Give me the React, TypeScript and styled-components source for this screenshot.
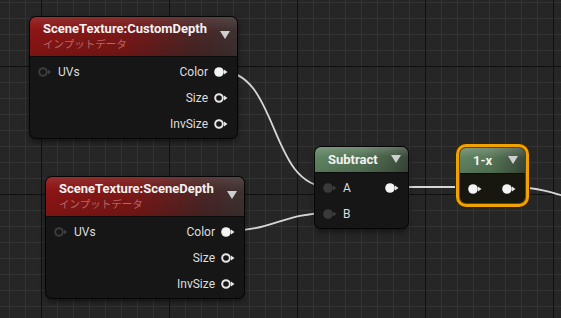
import React from 'react';
import styled, { createGlobalStyle, css } from 'styled-components';

type PinKind = 'filled' | 'open' | 'dim' | 'linked';
type Tone = 'red' | 'green';

interface PinSpec {
  label?: string;
  pin: PinKind;
}

interface RowSpec {
  input?: PinSpec;
  output?: PinSpec;
}

interface NodeSpec {
  id: string;
  x: number;
  y: number;
  w: number;
  tone: Tone;
  title: string;
  subtitle?: string;
  selected?: boolean;
  rows: RowSpec[];
}

const nodes: NodeSpec[] = [
  {
    id: 'customDepth',
    x: 30,
    y: 17,
    w: 207,
    tone: 'red',
    title: 'SceneTexture:CustomDepth',
    subtitle: 'インプットデータ',
    rows: [
      { input: { label: 'UVs', pin: 'dim' }, output: { label: 'Color', pin: 'filled' } },
      { output: { label: 'Size', pin: 'open' } },
      { output: { label: 'InvSize', pin: 'open' } },
    ],
  },
  {
    id: 'sceneDepth',
    x: 46,
    y: 177,
    w: 198,
    tone: 'red',
    title: 'SceneTexture:SceneDepth',
    subtitle: 'インプットデータ',
    rows: [
      { input: { label: 'UVs', pin: 'dim' }, output: { label: 'Color', pin: 'filled' } },
      { output: { label: 'Size', pin: 'open' } },
      { output: { label: 'InvSize', pin: 'open' } },
    ],
  },
  {
    id: 'subtract',
    x: 315,
    y: 147,
    w: 93,
    tone: 'green',
    title: 'Subtract',
    rows: [
      { input: { label: 'A', pin: 'linked' }, output: { pin: 'filled' } },
      { input: { label: 'B', pin: 'linked' } },
    ],
  },
  {
    id: 'oneMinus',
    x: 460,
    y: 148,
    w: 65,
    tone: 'green',
    title: '1-x',
    selected: true,
    rows: [{ input: { pin: 'filled' }, output: { pin: 'filled' } }],
  },
];

// wire curves, drawn under the nodes
const wires = [
  'M 220 71 C 280 71, 268 187, 329 187',
  'M 227 231 C 272 231, 283 213, 329 213',
  'M 391 187 L 473 187',
  'M 509 187 C 548 187, 560 196, 620 214',
];

const GlobalStyle = createGlobalStyle`
  html, body {
    margin: 0;
    padding: 0;
    background: #262626;
  }
  body {
    font-family: Roboto, "Noto Sans", "Noto Sans CJK JP", sans-serif;
  }
`;

const Canvas = styled.div`
  position: relative;
  width: 561px;
  height: 318px;
  overflow: hidden;
  background-color: #262626;
  background-image:
    linear-gradient(to right, #101010 1px, transparent 1px),
    linear-gradient(to bottom, #101010 1px, transparent 1px),
    linear-gradient(to right, #333333 1px, transparent 1px),
    linear-gradient(to bottom, #333333 1px, transparent 1px);
  background-size: 128px 128px, 128px 128px, 16px 16px, 16px 16px;
  background-position: 41px 66px, 41px 66px, 9px 2px, 9px 2px;
`;

const WireLayer = styled.svg`
  position: absolute;
  inset: 0;
  width: 561px;
  height: 318px;
`;

const Wire = styled.path`
  fill: none;
  stroke: #d6d6d6;
  stroke-width: 1.8;
`;

const NodeBox = styled.div<{ $x: number; $y: number; $w: number; $selected?: boolean }>`
  position: absolute;
  left: ${(p) => p.$x}px;
  top: ${(p) => p.$y}px;
  width: ${(p) => p.$w}px;
  background: #151615;
  border-radius: 6px;
  box-shadow: 0 0 0 1px #050505, 0 3px 6px rgba(0, 0, 0, 0.55);
  ${(p) =>
    p.$selected &&
    css`
      background: #17160f;
      box-shadow: 0 0 0 1px #6a4200, 0 0 0 4px #f2a200, 0 0 0 5px #3a2500;
    `}
`;

const Header = styled.div<{ $tone: Tone }>`
  display: flex;
  align-items: center;
  padding: ${(p) => (p.$tone === 'red' ? '4px 7px 5px 13px' : '5px 7px 5px 13px')};
  border-radius: 6px 6px 0 0;
  border-bottom: 1px solid #0c0c0c;
  background: ${(p) =>
    p.$tone === 'red'
      ? `linear-gradient(to bottom, rgba(255,255,255,0.10) 0%, rgba(255,255,255,0) 35%, rgba(0,0,0,0.12) 100%),
         linear-gradient(to right, #8d1515 0%, #7b1717 45%, #4a2626 80%, #3e3232 100%)`
      : `linear-gradient(to bottom, rgba(255,255,255,0.18) 0%, rgba(255,255,255,0) 40%, rgba(0,0,0,0.1) 100%),
         linear-gradient(to right, #608462 0%, #557556 50%, #435843 85%, #3a4739 100%)`};
`;

const TitleBlock = styled.div`
  flex: 1;
  min-width: 0;
  display: flex;
  flex-direction: column;
`;

const Title = styled.div`
  color: #f2f2f2;
  font-weight: 700;
  font-size: 13px;
  line-height: 15px;
  white-space: nowrap;
`;

const Subtitle = styled.div`
  color: #b56767;
  font-family: "Noto Sans CJK JP", Roboto, sans-serif;
  font-size: 10.5px;
  line-height: 15px;
  white-space: nowrap;
`;

const Caret = styled.div`
  flex: none;
  width: 0;
  height: 0;
  margin-bottom: 2px;
  border-left: 5.5px solid transparent;
  border-right: 5.5px solid transparent;
  border-top: 8px solid #cfcfcf;
`;

const Body = styled.div`
  padding: 2px 0 1px;
`;

const Row = styled.div`
  display: flex;
  align-items: center;
  justify-content: space-between;
  height: 26px;
`;

const PinGroup = styled.div<{ $side: 'in' | 'out' }>`
  display: flex;
  align-items: center;
  gap: 6px;
  margin-left: ${(p) => (p.$side === 'out' ? 'auto' : '0')};
  padding: ${(p) => (p.$side === 'in' ? '0 0 0 8px' : '0 9px 0 0')};
`;

const PinLabel = styled.span`
  color: #dedede;
  font-size: 12px;
  line-height: 26px;
  white-space: nowrap;
`;

const PinSvg = styled.svg`
  flex: none;
  display: block;
`;

const pinColors: Record<PinKind, { fill: string; stroke: string }> = {
  filled: { fill: '#f4f4f4', stroke: 'none' },
  open: { fill: 'none', stroke: '#e6e6e6' },
  dim: { fill: 'none', stroke: '#3c3c3c' },
  linked: { fill: '#3a3a3a', stroke: 'none' },
};

const Pin: React.FC<{ kind: PinKind }> = ({ kind }) => {
  const c = pinColors[kind];
  const hollow = c.fill === 'none';
  const arrow = kind === 'dim' || kind === 'linked' ? '#3c3c3c' : '#e6e6e6';
  return (
    <PinSvg width="14" height="10" viewBox="0 0 14 10">
      {hollow ? (
        <circle cx="5" cy="5" r="3.8" fill="none" stroke={c.stroke} strokeWidth="2" />
      ) : (
        <circle cx="5" cy="5" r="4.8" fill={c.fill} />
      )}
      <polygon points="10,2.6 13.5,5 10,7.4" fill={arrow} />
    </PinSvg>
  );
};

const GraphNode: React.FC<{ node: NodeSpec }> = ({ node }) => (
  <NodeBox $x={node.x} $y={node.y} $w={node.w} $selected={node.selected}>
    <Header $tone={node.tone}>
      <TitleBlock>
        <Title>{node.title}</Title>
        {node.subtitle && <Subtitle>{node.subtitle}</Subtitle>}
      </TitleBlock>
      <Caret />
    </Header>
    <Body>
      {node.rows.map((row, i) => (
        <Row key={i}>
          {row.input && (
            <PinGroup $side="in">
              <Pin kind={row.input.pin} />
              {row.input.label && <PinLabel>{row.input.label}</PinLabel>}
            </PinGroup>
          )}
          {row.output && (
            <PinGroup $side="out">
              {row.output.label && <PinLabel>{row.output.label}</PinLabel>}
              <Pin kind={row.output.pin} />
            </PinGroup>
          )}
        </Row>
      ))}
    </Body>
  </NodeBox>
);

const App: React.FC = () => (
  <>
    <GlobalStyle />
    <Canvas>
      <WireLayer viewBox="0 0 561 318">
        {wires.map((d, i) => (
          <Wire key={i} d={d} />
        ))}
      </WireLayer>
      {nodes.map((n) => (
        <GraphNode key={n.id} node={n} />
      ))}
    </Canvas>
  </>
);

export default App;
